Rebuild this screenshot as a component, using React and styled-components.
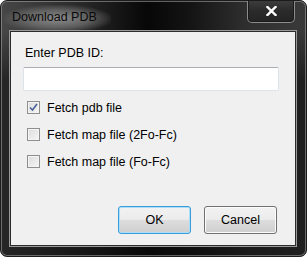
import React, { useState } from 'react';
import styled, { createGlobalStyle } from 'styled-components';

const GlobalStyle = createGlobalStyle`
  html, body {
    margin: 0;
    padding: 0;
    background: #ffffff;
  }
  * {
    box-sizing: border-box;
  }
`;

const Window = styled.div`
  width: 307px;
  height: 257px;
  display: flex;
  flex-direction: column;
  padding: 0 10px 10px 9px;
  border: 1px solid #1b1b1b;
  border-radius: 7px;
  box-shadow: inset 0 0 0 1px rgba(170, 170, 170, 0.55);
  background:
    linear-gradient(to bottom, rgba(0, 0, 0, 0) 0px, rgba(0, 0, 0, 0) 30px, rgba(10, 10, 10, 0.55) 80px),
    linear-gradient(to right, #474747 0%, #2a2a2a 25%, #070707 48%, #141414 62%, #2e2e2e 80%, #3a3a3a 100%);
  font-family: 'Liberation Sans', Arial, sans-serif;
  overflow: hidden;
`;

const TitleBar = styled.div`
  height: 30px;
  display: flex;
  align-items: flex-start;
  justify-content: space-between;
`;

const Title = styled.span`
  margin: 4px 0 0 -6px;
  padding: 5px 14px 6px 8px;
  font-size: 12.5px;
  color: #0a0a0a;
  background: radial-gradient(ellipse at 50% 55%, rgba(150, 150, 150, 0.9) 0%, rgba(120, 120, 120, 0.65) 45%, rgba(100, 100, 100, 0) 75%);
`;

const CloseButton = styled.button`
  width: 48px;
  height: 23px;
  margin: -1px 1px 0 0;
  padding: 0;
  display: flex;
  align-items: center;
  justify-content: center;
  border: 1px solid #8c8c8c;
  border-top: none;
  border-radius: 0 0 5px 5px;
  background: linear-gradient(to bottom, #3e3e3e, #2a2a2a 50%, #242424);
  box-shadow: inset 0 0 0 1px #1a1a1a;
  cursor: pointer;
`;

const Content = styled.div`
  flex: 1;
  display: flex;
  flex-direction: column;
  background: #f0f0f0;
  border: 1px solid #2c2c2c;
  box-shadow: 0 0 0 1px #9a9a9a;
  padding: 13px 16px 11px 12px;
  color: #000;
  font-size: 12.5px;
`;

const Label = styled.div`
  padding-left: 2px;
  line-height: 16px;
`;

const TextInput = styled.input`
  margin-top: 6px;
  height: 24px;
  width: 100%;
  border: 1px solid #dde3ea;
  border-top-color: #abadb3;
  border-radius: 2px;
  background: #fff;
  outline: none;
  font: inherit;
  padding: 0 4px;
`;

const OptionList = styled.div`
  margin-top: 3px;
  display: flex;
  flex-direction: column;
  padding-left: 4px;
`;

const Option = styled.label`
  height: 27px;
  display: flex;
  align-items: center;
  gap: 7px;
  cursor: default;
`;

const Box = styled.span`
  width: 13px;
  height: 13px;
  display: flex;
  align-items: center;
  justify-content: center;
  border: 1px solid #8e8f8f;
  background: linear-gradient(135deg, #dcdcdc, #f6f6f6);
  box-shadow: inset 0 0 0 1px #f4f4f4;
`;

const ButtonRow = styled.div`
  margin-top: auto;
  display: flex;
  justify-content: flex-end;
  gap: 13px;
  padding-right: 2px;
`;

const Button = styled.button`
  width: 73px;
  height: 28px;
  padding: 0;
  border: 1px solid ${(p) => (p.$primary ? '#3c9bd8' : '#707070')};
  border-radius: 3px;
  background: linear-gradient(to bottom, #f2f2f2 0%, #ebebeb 50%, #dddddd 51%, #cfcfcf 100%);
  box-shadow: inset 0 0 0 1px ${(p) => (p.$primary ? '#a8e0fa' : '#fcfcfc')};
  font-family: 'Liberation Sans', Arial, sans-serif;
  font-size: 12.5px;
  color: #000;
  cursor: pointer;
`;

function CheckMark() {
  return (
    <svg width="9" height="9" viewBox="0 0 9 9">
      <path d="M1 4.5 L3.5 7 L8 1" fill="none" stroke="#4a5f97" strokeWidth="1.6" />
    </svg>
  );
}

const options = [
  { id: 'pdb', text: 'Fetch pdb file' },
  { id: '2fofc', text: 'Fetch map file (2Fo-Fc)' },
  { id: 'fofc', text: 'Fetch map file (Fo-Fc)' },
];

export default function App() {
  const [checked, setChecked] = useState({ pdb: true, '2fofc': false, fofc: false });

  return (
    <>
      <GlobalStyle />
      <Window>
        <TitleBar>
          <Title>Download PDB</Title>
          <CloseButton aria-label="Close">
            <svg width="11" height="10" viewBox="0 0 11 10">
              <path d="M1.5 1 L9.5 9 M9.5 1 L1.5 9" stroke="#fff" strokeWidth="2.4" strokeLinecap="square" />
            </svg>
          </CloseButton>
        </TitleBar>
        <Content>
          <Label>Enter PDB ID:</Label>
          <TextInput type="text" />
          <OptionList>
            {options.map((o) => (
              <Option
                key={o.id}
                onClick={() => setChecked({ ...checked, [o.id]: !checked[o.id] })}
              >
                <Box>{checked[o.id] && <CheckMark />}</Box>
                {o.text}
              </Option>
            ))}
          </OptionList>
          <ButtonRow>
            <Button $primary>OK</Button>
            <Button>Cancel</Button>
          </ButtonRow>
        </Content>
      </Window>
    </>
  );
}
